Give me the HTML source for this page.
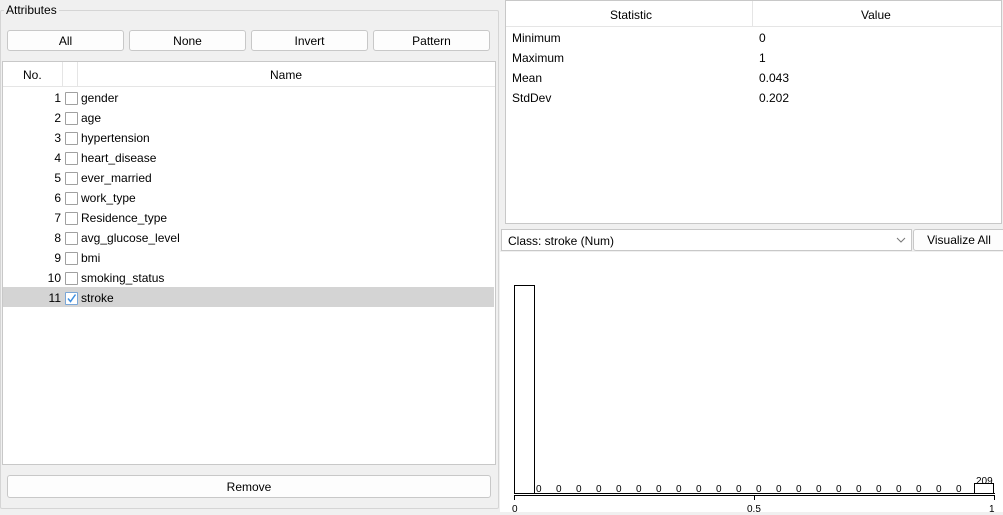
<!DOCTYPE html>
<html><head><meta charset="utf-8"><style>
*{box-sizing:border-box;margin:0;padding:0}
body{width:1003px;height:515px;background:#f0f0f0;font-family:"Liberation Sans",sans-serif;font-size:12px;color:#000;position:relative;overflow:hidden}
.a{position:absolute}
.btn{position:absolute;background:#fdfdfd;border:1px solid #c8c8c8;border-radius:3px;text-align:center;font-size:12px}
.row{position:absolute;left:3px;width:491px;height:20px}
.num{position:absolute;right:433px;top:4px;text-align:right}
.cb{position:absolute;left:62px;top:5px;width:13px;height:13px;border:1px solid #a0a0a0;background:#fff;border-radius:1px}
.nm{position:absolute;left:78px;top:4px}
</style></head><body>
<div class="a" style="left:0;top:10px;width:499px;height:499px;border:1px solid #d5d5d5;border-radius:2px"></div>
<div class="a" style="left:4px;top:3px;padding:0 2px;background:#f0f0f0;font-size:12px">Attributes</div>
<div class="btn" style="left:7px;top:30px;width:117px;height:21px;line-height:21px">All</div>
<div class="btn" style="left:129px;top:30px;width:117px;height:21px;line-height:21px">None</div>
<div class="btn" style="left:251px;top:30px;width:117px;height:21px;line-height:21px">Invert</div>
<div class="btn" style="left:373px;top:30px;width:117px;height:21px;line-height:21px">Pattern</div>
<div class="a" style="left:2px;top:61px;width:494px;height:404px;background:#fff;border:1px solid #c8c8c8"></div>
<div class="a" style="left:3px;top:62px;width:492px;height:25px;border-bottom:1px solid #e5e5e5"></div>
<div class="a" style="left:62px;top:62px;width:1px;height:25px;background:#e5e5e5"></div>
<div class="a" style="left:77px;top:62px;width:1px;height:25px;background:#e5e5e5"></div>
<div class="a" style="left:23px;top:68px">No.</div>
<div class="a" style="left:270px;top:68px">Name</div>
<div class="row" style="top:87px"><span class="num">1</span><span class="cb"></span><span class="nm">gender</span></div>
<div class="row" style="top:107px"><span class="num">2</span><span class="cb"></span><span class="nm">age</span></div>
<div class="row" style="top:127px"><span class="num">3</span><span class="cb"></span><span class="nm">hypertension</span></div>
<div class="row" style="top:147px"><span class="num">4</span><span class="cb"></span><span class="nm">heart_disease</span></div>
<div class="row" style="top:167px"><span class="num">5</span><span class="cb"></span><span class="nm">ever_married</span></div>
<div class="row" style="top:187px"><span class="num">6</span><span class="cb"></span><span class="nm">work_type</span></div>
<div class="row" style="top:207px"><span class="num">7</span><span class="cb"></span><span class="nm">Residence_type</span></div>
<div class="row" style="top:227px"><span class="num">8</span><span class="cb"></span><span class="nm">avg_glucose_level</span></div>
<div class="row" style="top:247px"><span class="num">9</span><span class="cb"></span><span class="nm">bmi</span></div>
<div class="row" style="top:267px"><span class="num">10</span><span class="cb"></span><span class="nm">smoking_status</span></div>
<div class="row" style="top:287px;background:#d4d4d4"><span class="num">11</span><span class="cb" style="border-color:#7aa6d6"><svg width="11" height="11" style="position:absolute;left:0;top:0"><path d="M2 5.5 L4.5 8.5 L9.5 1.5" stroke="#3d8ee0" stroke-width="1.5" fill="none"/></svg></span><span class="nm">stroke</span></div>
<div class="btn" style="left:7px;top:475px;width:484px;height:23px;line-height:22px">Remove</div>

<div class="a" style="left:505px;top:0;width:497px;height:224px;background:#fff;border:1px solid #c8c8c8"></div>
<div class="a" style="left:506px;top:1px;width:495px;height:26px;border-bottom:1px solid #e5e5e5"></div>
<div class="a" style="left:752px;top:1px;width:1px;height:26px;background:#e5e5e5"></div>
<div class="a" style="left:610px;top:8px">Statistic</div>
<div class="a" style="left:861px;top:8px">Value</div>
<div class="a" style="left:512px;top:31px">Minimum</div><div class="a" style="left:759px;top:31px">0</div>
<div class="a" style="left:512px;top:51px">Maximum</div><div class="a" style="left:759px;top:51px">1</div>
<div class="a" style="left:512px;top:71px">Mean</div><div class="a" style="left:759px;top:71px">0.043</div>
<div class="a" style="left:512px;top:91px">StdDev</div><div class="a" style="left:759px;top:91px">0.202</div>

<div class="a" style="left:501px;top:229px;width:411px;height:22px;background:#fff;border:1px solid #c8c8c8"></div>
<div class="a" style="left:508px;top:234px">Class: stroke (Num)</div>
<svg class="a" style="left:896px;top:237px" width="10" height="7"><path d="M1 1 L5 5 L9 1" stroke="#777" fill="none"/></svg>
<div class="btn" style="left:913px;top:229px;width:92px;height:22px;line-height:21px;border-radius:3px 0 0 3px">Visualize All</div>

<div class="a" style="left:500px;top:252px;width:503px;height:260px;background:#fff"></div>
<svg class="a" style="left:0;top:0" width="1003" height="515" font-family="Liberation Sans,sans-serif" font-size="10">
<rect x="514.5" y="285.5" width="20" height="208" fill="none" stroke="#000"/>
<rect x="974.5" y="483.5" width="19" height="10" fill="none" stroke="#000"/>
<line x1="514" y1="493.5" x2="995" y2="493.5" stroke="#000"/>
<line x1="514" y1="495.5" x2="995" y2="495.5" stroke="#000"/>
<line x1="514.5" y1="495" x2="514.5" y2="500" stroke="#000"/>
<line x1="754.5" y1="495" x2="754.5" y2="500" stroke="#000"/>
<line x1="994.5" y1="495" x2="994.5" y2="500" stroke="#000"/>
<text x="512" y="512">0</text><text x="747" y="512">0.5</text><text x="989" y="512">1</text>
<text x="976" y="484">209</text>
<g>
<text x="536" y="492">0</text><text x="556" y="492">0</text><text x="576" y="492">0</text><text x="596" y="492">0</text><text x="616" y="492">0</text><text x="636" y="492">0</text><text x="656" y="492">0</text><text x="676" y="492">0</text><text x="696" y="492">0</text><text x="716" y="492">0</text><text x="736" y="492">0</text><text x="756" y="492">0</text><text x="776" y="492">0</text><text x="796" y="492">0</text><text x="816" y="492">0</text><text x="836" y="492">0</text><text x="856" y="492">0</text><text x="876" y="492">0</text><text x="896" y="492">0</text><text x="916" y="492">0</text><text x="936" y="492">0</text><text x="956" y="492">0</text>
</g>
</svg>
</body></html>
